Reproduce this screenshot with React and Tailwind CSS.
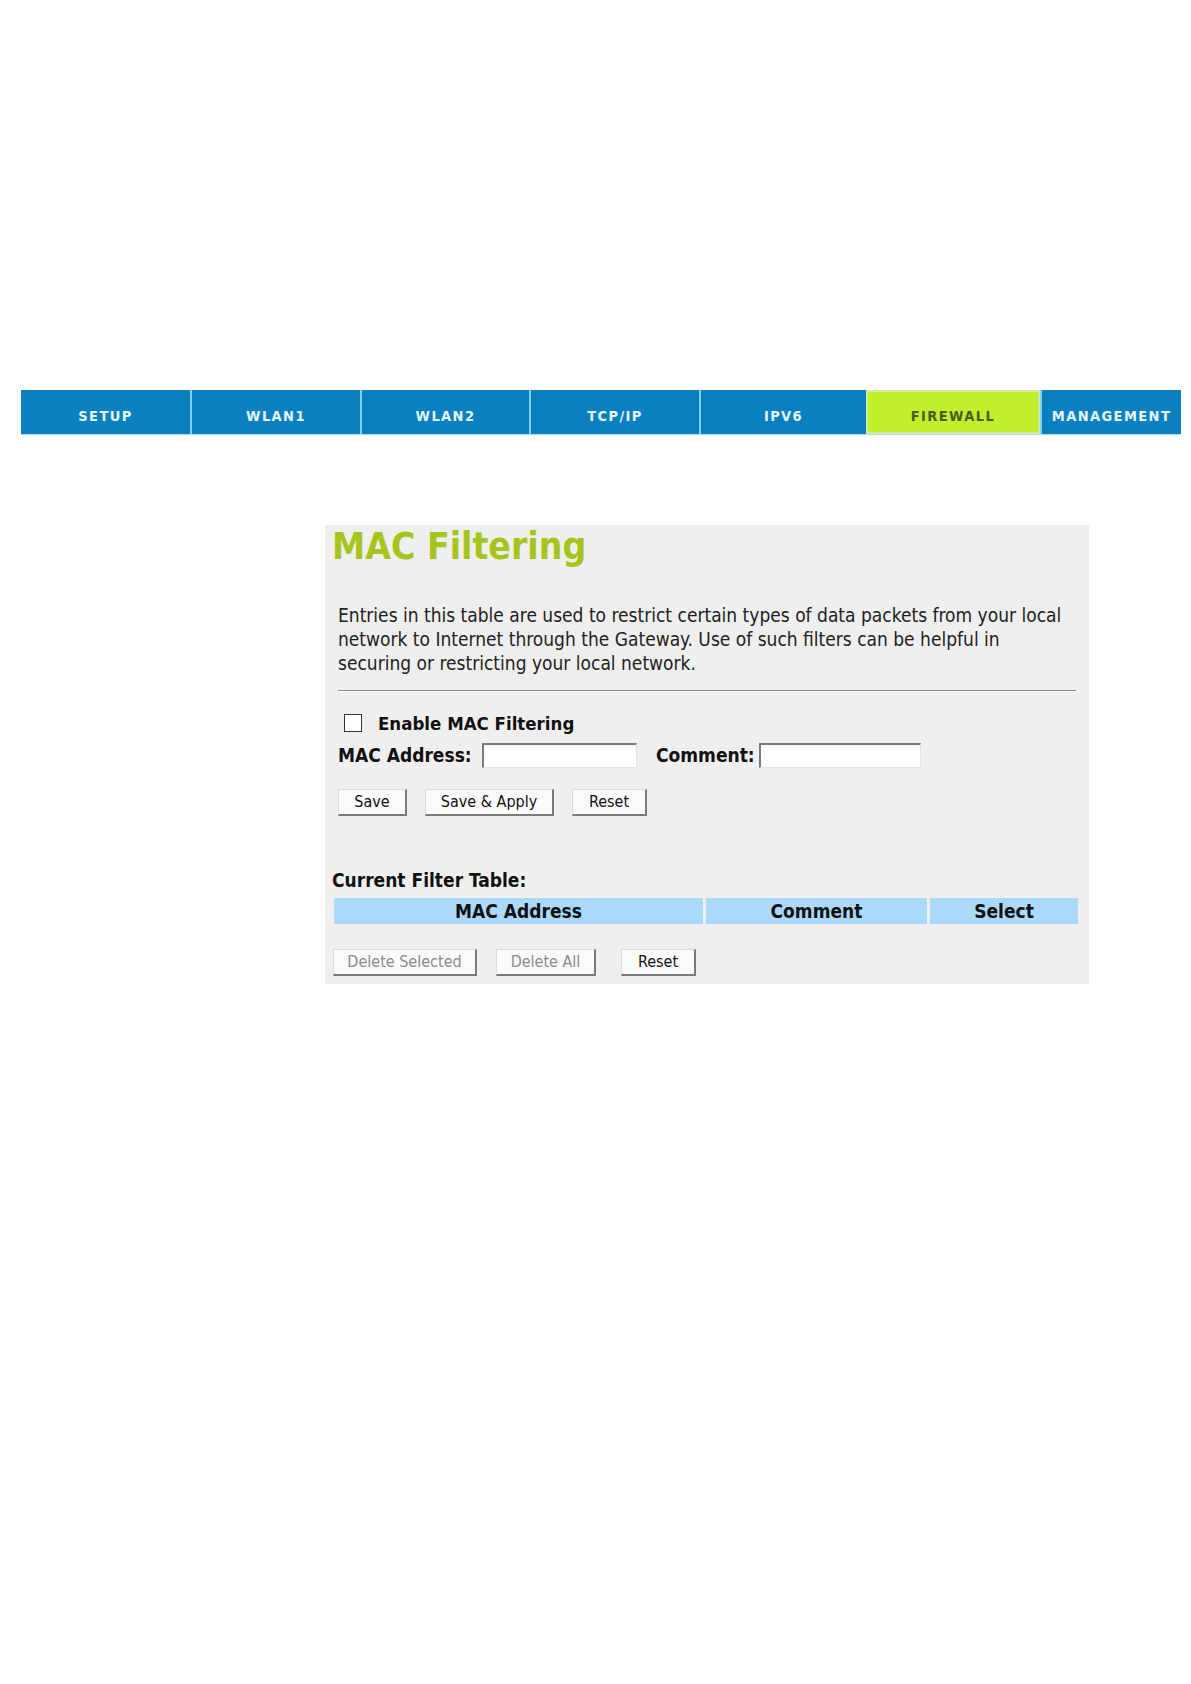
const tabs = [
  { label: 'SETUP', w: 'w-[169px]' },
  { label: 'WLAN1', w: 'w-[170px]' },
  { label: 'WLAN2', w: 'w-[169px]' },
  { label: 'TCP/IP', w: 'w-[170px]' },
  { label: 'IPV6', w: 'w-[167px]' },
  { label: 'FIREWALL', w: 'w-[174px]', active: true },
  { label: 'MANAGEMENT', w: 'w-[141px]' },
]

const font = { fontFamily: '"DejaVu Sans Condensed", "DejaVu Sans", sans-serif' }

const Btn = ({ children, w, disabled }) => (
  <button
    className={`${w} h-[27px] bg-[#fbfbfb] border-t border-l border-[#dcdcdc] border-r-2 border-b-2 border-r-[#7a7a7a] border-b-[#7a7a7a] text-[16px] leading-none ${disabled ? 'text-[#8a8a8a]' : 'text-[#111]'}`}
  >
    {children}
  </button>
)

const Field = ({ w }) => (
  <div className={`${w} h-[25px] bg-white border-t-2 border-l-2 border-[#7a7a7a] border-r border-b border-r-[#e4e4e4] border-b-[#e4e4e4]`}></div>
)

const App = () => {
  return (
    <div className="min-h-[1684px] bg-white pt-[390px]" style={font}>
      <div className="ml-[21px] w-[1160px] h-[45px] flex bg-[#0a80c0] border-b border-[#a9dcf5]">
        {tabs.map((t, i) => (
          <div
            key={t.label}
            className={`${t.w} h-full flex items-center justify-center pt-[9px] font-bold text-[14.5px] tracking-[1.4px] ${i > 0 ? 'border-l-2 border-[#7fd0ff]' : ''} ${t.active ? 'bg-[#bff02a] text-[#4b5a1c] border-2 border-[#d6e8a8]' : 'text-[#e8f6ff]'}`}
          >
            {t.label}
          </div>
        ))}
      </div>

      <div className="ml-[325px] mt-[90px] w-[764px] h-[459px] bg-[#efefef] pl-[7px] pr-[10px]">
        <h1 className="text-[37px] leading-[44px] font-bold text-[#a6c41c]">MAC Filtering</h1>

        <div className="pl-[6px] pr-[3px]">
          <p className="mt-[34px] text-[19px] leading-[24px] text-[#222] whitespace-nowrap">
            Entries in this table are used to restrict certain types of data packets from your local<br />
            network to Internet through the Gateway. Use of such filters can be helpful in<br />
            securing or restricting your local network.
          </p>
          <div className="mt-[15px] border-t border-[#8c8c8c] border-b border-b-white"></div>

          <div className="flex items-center h-[24px] mt-[20px]">
            <div className="ml-[6px] -mt-[3px] w-[18px] h-[18px] border border-[#333] bg-white"></div>
            <span className="ml-[16px] text-[18.5px] font-bold text-[#111]">Enable MAC Filtering</span>
          </div>

          <div className="flex items-center h-[26px] mt-[6px] text-[19px] font-bold text-[#111] whitespace-nowrap">
            <span className="w-[144px]">MAC Address:</span>
            <Field w="w-[155px]" />
            <span className="ml-[19px] w-[103px]">Comment:</span>
            <Field w="w-[162px]" />
          </div>

          <div className="flex mt-[21px]">
            <Btn w="w-[69px]">Save</Btn>
            <div className="ml-[18px]"><Btn w="w-[129px]">Save &amp; Apply</Btn></div>
            <div className="ml-[18px]"><Btn w="w-[75px]">Reset</Btn></div>
          </div>
        </div>

        <div className="mt-[52px] text-[19px] leading-[24px] font-bold text-[#111]">Current Filter Table:</div>

        <div className="mt-[6px] ml-[2px] flex gap-[3px] h-[26px] text-[19px] font-bold text-[#111]">
          <div className="w-[369px] bg-[#aad9fb] flex items-center justify-center">MAC Address</div>
          <div className="w-[221px] bg-[#aad9fb] flex items-center justify-center">Comment</div>
          <div className="w-[148px] bg-[#aad9fb] flex items-center justify-center">Select</div>
        </div>

        <div className="flex mt-[25px] ml-[1px]">
          <Btn w="w-[144px]" disabled>Delete Selected</Btn>
          <div className="ml-[19px]"><Btn w="w-[100px]" disabled>Delete All</Btn></div>
          <div className="ml-[25px]"><Btn w="w-[75px]">Reset</Btn></div>
        </div>
      </div>
    </div>
  )
}

export default App
